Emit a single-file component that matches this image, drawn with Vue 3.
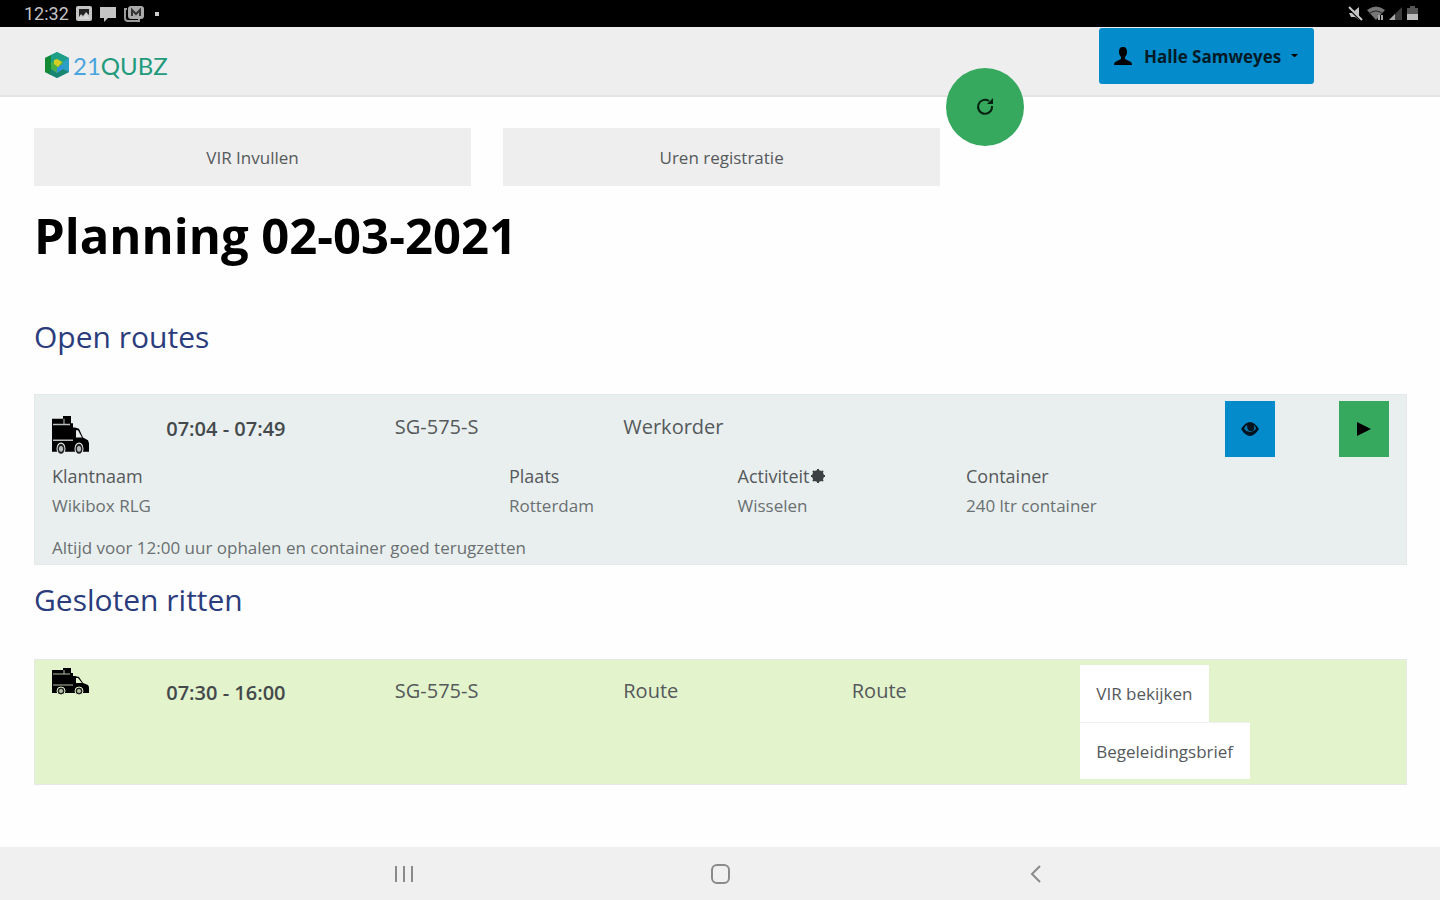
<script setup>
const details = [
  { label: 'Klantnaam', value: 'Wikibox RLG', cls: 'from-1', marked: false },
  { label: 'Plaats', value: 'Rotterdam', cls: 'from-5', marked: false },
  { label: 'Activiteit', value: 'Wisselen', cls: 'from-7', marked: true },
  { label: 'Container', value: '240 ltr container', cls: 'from-9', marked: false },
]
</script>

<template>
  <div class="screen">
    <div class="status">
      <div class="status-group">
        <span class="clock">12:32</span>
        <svg width="16" height="16" viewBox="0 0 16 16"><rect width="16" height="15" rx="2" fill="#c4c4c4" /><path d="M3 3h10v6l-3-3-3 4-2-2-2 3z" fill="#222" /><path d="M2 13l3-3 2 2 3-4 4 5z" fill="#d8d8d8" /></svg>
        <svg width="18" height="16" viewBox="0 0 18 16"><path d="M1 1h16v11H9l-4 4v-4H1z" fill="#c4c4c4" /></svg>
        <svg width="20" height="16" viewBox="0 0 20 16"><path d="M3 3H1v9q0 3 3 3h11v-2" fill="none" stroke="#999" stroke-width="2" /><rect x="4" y="0" width="16" height="13" rx="3" fill="#aaa" /><path d="M8 10V4l4 4 4-4v6" fill="none" stroke="#333" stroke-width="2" /></svg>
        <span class="dot"></span>
      </div>
      <div class="status-group status-right">
        <svg width="15" height="16" viewBox="0 0 15 16"><path d="M1 7h3l7-6v13l-4-3H3z" fill="#c4c4c4" /><path d="M1 2l13 13" stroke="#000" stroke-width="3" /><path d="M1 1l13 13" stroke="#ccc" stroke-width="2" /></svg>
        <svg width="18" height="15" viewBox="0 0 18 15"><path d="M0 4q9-7 18 0l-9 10z" fill="#777" /><path d="M3 7q6-4 12 0" fill="none" stroke="#222" /><path d="M12 9v5M15 9v5" stroke="#aaa" stroke-width="2" /></svg>
        <svg width="14" height="15" viewBox="0 0 14 15"><path d="M0 14l13-13v13z" fill="#3c3c3c" /><path d="M0 14l6-6v6z" fill="#aaa" /></svg>
        <svg width="11" height="15" viewBox="0 0 11 15"><path d="M3 0h5v2h3v12H0V2h3z" fill="#555" /><path d="M0 8h11v6H0z" fill="#bbb" /></svg>
      </div>
    </div>

    <header class="topbar">
      <a class="logo" href="#">
        <svg width="26" height="28" viewBox="0 0 26 28">
          <path d="M13 1l12 6v14l-12 6-12-6V7z" fill="#2c9fc4" />
          <path d="M1 7l6-3v20l-6-3z" fill="#158a34" />
          <path d="M7 4l6-3 12 6-6 4-6-3-6 4z" fill="#1f9f86" />
          <path d="M7 12l6-4 6 3v7l-6 4-6-4z" fill="#47b04a" />
          <path d="M10 9l3-1 5 3-4 5-4-3z" fill="#d3cf22" />
          <path d="M7 18l6 4 6-4 6 3-12 6-8-4z" fill="#17856f" />
          <path d="M13 17l6-4v5l-6 4z" fill="#2f92e0" />
        </svg>
        <span><span class="logo-num">21</span>QUBZ</span>
      </a>
      <button class="user" type="button">
        <svg width="18" height="18" viewBox="0 0 18 18"><path d="M9 0c3 0 4 2 4 5 0 2-1 4-2 5v2l6 3q1 1 1 3H0q0-2 1-3l6-3v-2C6 9 5 7 5 5c0-3 1-5 4-5z" fill="#000" /></svg>
        <span>Halle Samweyes</span>
        <svg class="caret" width="7" height="4" viewBox="0 0 7 4"><path d="M0 0h7L4 3H3z" fill="#000" /></svg>
      </button>
      <button class="refresh" type="button" aria-label="Vernieuwen">
        <svg width="20" height="20" viewBox="0 0 20 20"><path d="M14 4a7 7 0 1 0 3 5" fill="none" stroke="#06210f" stroke-width="2" /><path d="M18 1v6h-6z" fill="#06210f" /></svg>
      </button>
    </header>

    <main class="content">
      <div class="actions">
        <button type="button">VIR Invullen</button>
        <button type="button">Uren registratie</button>
      </div>

      <h1>Planning 02-03-2021</h1>

      <h2>Open routes</h2>
      <section class="card open">
        <div class="grid">
          <div class="cell from-1 truck-tall">
            <svg width="37" height="40" viewBox="0 0 37 28" preserveAspectRatio="none">
              <path d="M0 2h11V0h8v5h2v3h2l4 1 4 6 5 2 1 2v6H0z" fill="#000" />
              <path d="M24 10h2l4 5h-6z" fill="#e9efef" />
              <path d="M1 6h17M12 2v4M1 17h20" fill="none" stroke="#b9bfbf" />
              <circle cx="9" cy="23" r="4" fill="#222" stroke="#e9efef" /><circle cx="27" cy="23" r="4" fill="#222" stroke="#e9efef" />
              <circle cx="9" cy="23" r="2" fill="#b9bfbf" /><circle cx="27" cy="23" r="2" fill="#b9bfbf" />
            </svg>
          </div>
          <div class="cell from-2 time">07:04 - 07:49</div>
          <div class="cell from-4 info">SG-575-S</div>
          <div class="cell from-6 info">Werkorder</div>
          <div class="cell from-11 end">
            <button class="square view" type="button" aria-label="Bekijken">
              <svg width="18" height="14" viewBox="0 0 18 14"><path d="M0 7q9-14 18 0-9 14-18 0z" fill="#00141f" /><path d="M3 7q1-3 3-4 0 6 4 6t3-6q2 2 2 4-6 6-12 0z" fill="#0778b0" /><circle cx="10" cy="6" r="3" fill="#00141f" /></svg>
            </button>
          </div>
          <div class="cell from-12 end">
            <button class="square start" type="button" aria-label="Starten">
              <svg width="14" height="16" viewBox="0 0 14 16"><path d="M0 1l14 7-14 7z" fill="#000" /></svg>
            </button>
          </div>
        </div>
        <dl class="grid details">
          <div v-for="d in details" :key="d.label" class="cell" :class="d.cls">
            <dt>{{ d.label }}<svg v-if="d.marked" width="14" height="14" viewBox="0 0 14 14"><circle cx="7" cy="7" r="6" fill="#3c4143" /><path d="M7 0v14M0 7h14M2 2l10 10M12 2L2 12" stroke="#3c4143" stroke-width="2" /></svg></dt>
            <dd>{{ d.value }}</dd>
          </div>
        </dl>
        <p class="note">Altijd voor 12:00 uur ophalen en container goed terugzetten</p>
      </section>

      <h2 class="second">Gesloten ritten</h2>
      <section class="card closed">
        <div class="grid">
          <div class="cell from-1 truck">
            <svg width="37" height="28" viewBox="0 0 37 28">
              <path d="M0 2h11V0h8v5h2v3h2l4 1 4 6 5 2 1 2v6H0z" fill="#000" />
              <path d="M24 10h2l4 5h-6z" fill="#e3f3cc" />
              <path d="M1 6h17M12 2v4M1 17h20" fill="none" stroke="#b4c1a2" />
              <circle cx="9" cy="23" r="4" fill="#222" stroke="#e3f3cc" /><circle cx="27" cy="23" r="4" fill="#222" stroke="#e3f3cc" />
              <circle cx="9" cy="23" r="2" fill="#b4c1a2" /><circle cx="27" cy="23" r="2" fill="#b4c1a2" />
            </svg>
          </div>
          <div class="cell from-2 time">07:30 - 16:00</div>
          <div class="cell from-4 info">SG-575-S</div>
          <div class="cell from-6 info">Route</div>
          <div class="cell from-8 info">Route</div>
          <div class="cell from-10 links">
            <button type="button">VIR bekijken</button>
            <button type="button">Begeleidingsbrief</button>
          </div>
        </div>
      </section>
    </main>

    <nav class="sysnav">
      <button type="button" aria-label="Recente apps"><svg width="18" height="18" viewBox="0 0 18 18"><path d="M1 1v16M9 1v16M17 1v16" stroke="#8a8a8a" stroke-width="2" /></svg></button>
      <button type="button" aria-label="Startscherm"><svg width="20" height="20" viewBox="0 0 20 20"><rect x="2" y="1" width="17" height="18" rx="5" fill="none" stroke="#8a8a8a" stroke-width="2" /></svg></button>
      <button type="button" aria-label="Terug"><svg width="18" height="18" viewBox="0 0 18 18"><path d="M13 1L5 9l8 8" fill="none" stroke="#8a8a8a" stroke-width="2" /></svg></button>
    </nav>
  </div>
</template>

<style>
body { margin: 0; background: #fefefe; }
</style>

<style scoped>
.screen { min-height: 100vh; display: flex; flex-direction: column; font-family: "Open Sans", "Noto Sans", sans-serif; font-size: 18px; color: #55595b; }
.screen * { box-sizing: border-box; }
svg { display: block; flex: none; }
button { font: inherit; color: inherit; border: 0; padding: 0; margin: 0; cursor: pointer; }
.status { height: 27px; background: #000; display: flex; justify-content: space-between; align-items: center; padding: 0 22px 0 24px; }
.status-group { display: flex; align-items: center; gap: 7px; }
.status-right { gap: 4px; }
.clock { font-family: Roboto, sans-serif; font-size: 18px; line-height: 26px; color: #c4c4c4; }
.dot { width: 4px; height: 4px; margin-left: 4px; background: #ccc; }
.topbar { position: relative; height: 70px; background: #eee; border-bottom: 2px solid #e4e4e4; display: flex; justify-content: space-between; align-items: flex-start; padding: 1px 126px 0 44px; }
.logo { display: flex; align-items: center; gap: 3px; height: 74px; font-family: Lato, sans-serif; font-size: 24px; color: #1f9a7c; text-decoration: none; }
.logo-num { color: #4aa5de; }
.user { display: flex; align-items: center; width: 215px; height: 56px; padding: 0 16px 0 15px; background: #048bcb; border-radius: 3px; color: #031a27; font-weight: 700; font-size: 17px; }
.user span { margin-left: 12px; }
.caret { margin-left: auto; }
.refresh { position: absolute; right: 416px; top: 41px; width: 78px; height: 78px; border-radius: 50%; background: #36a95f; display: flex; align-items: center; justify-content: center; }
.content { padding: 31px 33px 48px 34px; }
.actions { display: grid; grid-template-columns: 1fr 1fr; gap: 32px; width: 66%; }
.actions button { height: 58px; background: #eee; font-size: 17px; }
h1 { margin: 15px 0 48px; font-size: 49px; line-height: 68px; font-weight: 700; color: #000; }
h2 { margin: 0 0 37px; font-size: 30px; line-height: 40px; font-weight: 400; color: #2b3c7c; }
.second { margin: 15px 0 39px; }
.card { border: 1px solid #e4e8e6; }
.open { background: #e9efef; padding: 6px 0 1px; }
.closed { background: #e3f3cc; padding: 5px 0; }
.grid { display: grid; grid-template-columns: repeat(12, minmax(0, 1fr)); }
.cell { grid-row: 1; padding: 0 17px; white-space: nowrap; }
.from-1 { grid-column: 1; }
.from-2 { grid-column: 2 / span 2; }
.from-4 { grid-column: 4 / span 2; }
.from-5 { grid-column: 5 / span 2; }
.from-6 { grid-column: 6 / span 2; }
.from-7 { grid-column: 7 / span 2; }
.from-8 { grid-column: 8 / span 2; }
.from-9 { grid-column: 9 / span 2; }
.from-10 { grid-column: 10 / span 3; }
.from-11 { grid-column: 11; }
.from-12 { grid-column: 12; }
.truck-tall { padding-top: 15px; }
.truck { padding-top: 3px; }
.time { font-size: 20px; line-height: 56px; font-weight: 600; color: #44494b; }
.info { font-size: 20px; line-height: 52px; }
.end { display: flex; justify-content: flex-end; }
.square { width: 50px; height: 56px; display: flex; align-items: center; justify-content: center; }
.view { background: #048bcb; }
.start { background: #36a95f; }
.details { margin: 4px 0 0; font-size: 17px; line-height: 30px; }
dt { display: flex; align-items: center; gap: 2px; font-size: 18px; }
dd { margin: 0; color: #6a6f71; }
.note { margin: 12px 17px 0; font-size: 17px; line-height: 30px; color: #6a6f71; }
.links { display: flex; flex-direction: column; align-items: flex-start; }
.links button { height: 57px; padding: 0 17px 0 16px; background: #fff; font-size: 17px; }
.links button + button { border-top: 1px solid #f0f0f0; }
.sysnav { margin-top: auto; height: 53px; background: #f0f0f0; display: flex; align-items: center; justify-content: center; gap: 276px; }
.sysnav button { width: 40px; height: 40px; background: none; display: flex; align-items: center; justify-content: center; }
</style>
